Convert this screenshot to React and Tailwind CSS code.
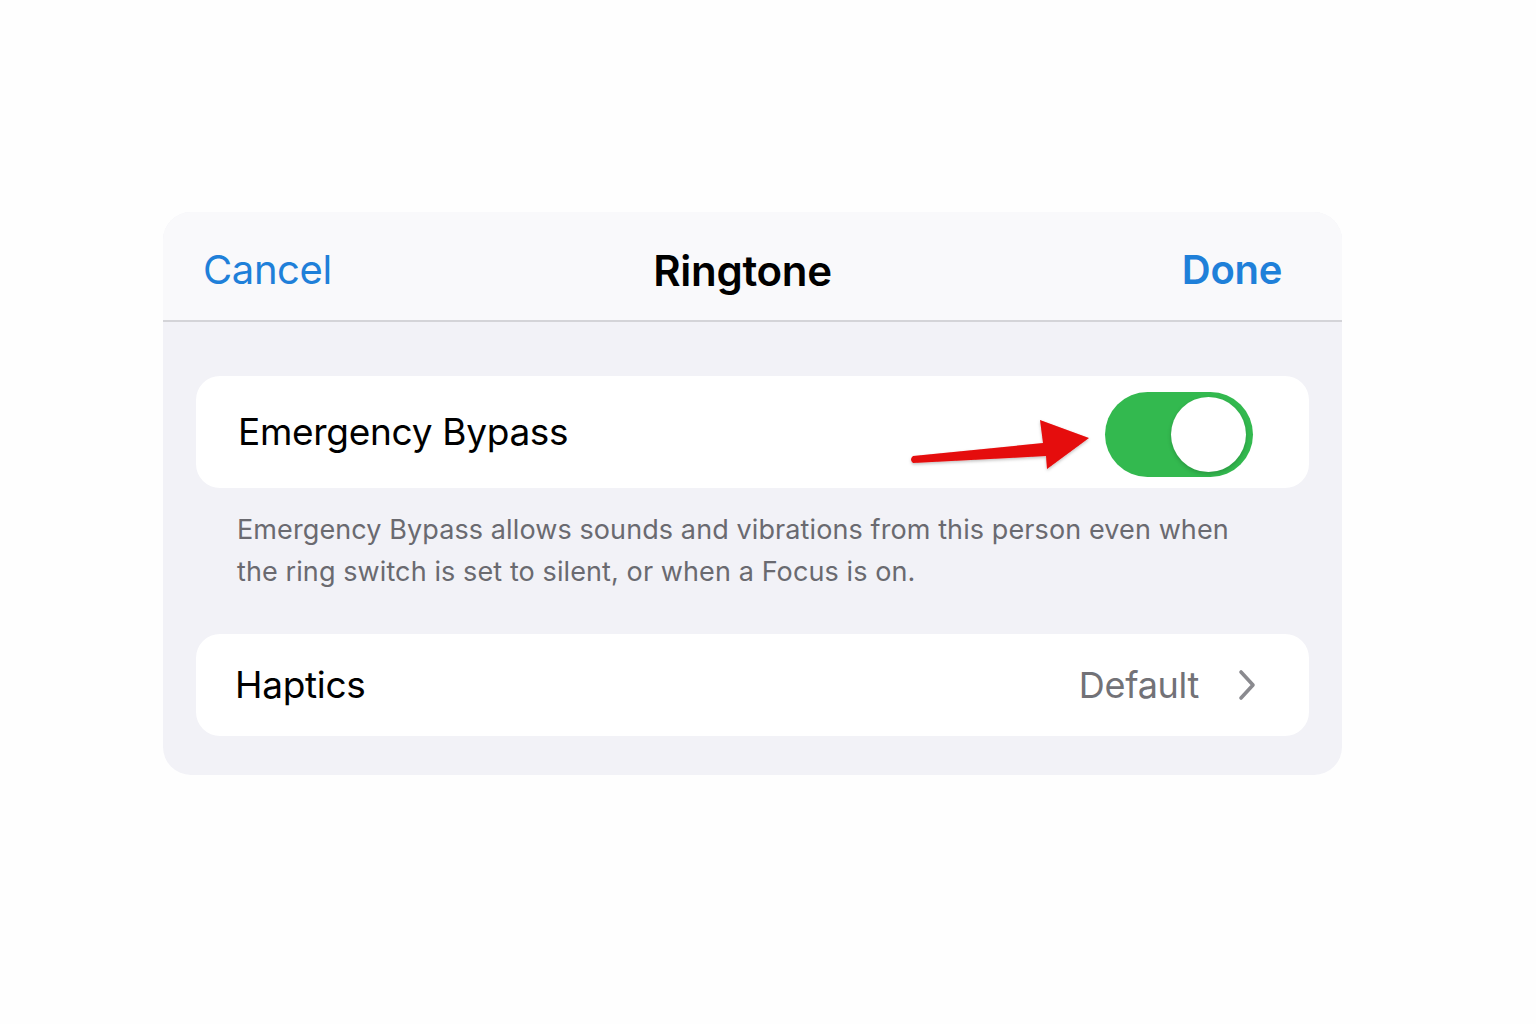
import React from 'react';

const font = { fontFamily: 'Inter, "Noto Sans", sans-serif' };

// Red callout arrow pointing at the switch
const Arrow = () => (
    <svg
        className="absolute left-[-205px] top-[22px]"
        width="200"
        height="60"
        viewBox="0 0 200 60"
    >
        <defs>
            <filter id="arrowShadow" x="-10%" y="-20%" width="120%" height="150%">
                <feDropShadow dx="0" dy="1.5" stdDeviation="1.5" floodColor="#000" floodOpacity="0.25" />
            </filter>
        </defs>
        <path
            d="M13 42 L143 29 L140 6 L189 24 L147 55 L146 42 L13 49 Q9 45.5 13 42 Z"
            fill="#e50909"
            filter="url(#arrowShadow)"
        />
    </svg>
);

const Toggle = () => (
    <div className="relative w-[148px] h-[85px] rounded-full bg-[#33b94f] shrink-0">
        <div className="absolute right-[7px] top-[5px] w-[75px] h-[75px] rounded-full bg-white shadow-[0_2px_4px_rgba(0,0,0,0.18)]" />
    </div>
);

const Chevron = () => (
    <svg width="20" height="32" viewBox="0 0 20 32" fill="none">
        <path d="M4 3 L16 16 L4 29" stroke="#8a8a8f" strokeWidth="3.6" strokeLinecap="round" strokeLinejoin="round" />
    </svg>
);

export default function App() {
    return (
        <div className="w-full h-[1024px] bg-[#fefefe] pt-[212px] pl-[163px]" style={font}>
            <div className="w-[1179px] rounded-[28px] overflow-hidden bg-[#f2f2f7]">
                {/* Navigation bar */}
                <div className="relative h-[110px] bg-[#f9f9fb] border-b-2 border-[#d4d4d8] flex items-center justify-between pl-[40px] pr-[60px] pt-[8px]">
                    <span className="text-[40px] text-[#1f80d9] tracking-[-0.4px]">Cancel</span>
                    <span className="absolute left-0 right-[20px] text-center text-[42px] font-semibold text-black tracking-[-0.3px] pointer-events-none">
                        Ringtone
                    </span>
                    <span className="text-[40px] font-semibold text-[#1f80d9] tracking-[-0.3px]">Done</span>
                </div>

                {/* Settings content */}
                <div className="px-[33px] pt-[54px] pb-[39px]">
                    <div className="h-[112px] rounded-[24px] bg-white flex items-center justify-between pl-[42px] pr-[56px]">
                        <span className="text-[37px] text-black tracking-[-0.3px]">Emergency Bypass</span>
                        <div className="relative mt-[4px]">
                            <Arrow />
                            <Toggle />
                        </div>
                    </div>

                    <p className="pl-[41px] pr-[40px] pt-[21px] h-[146px] text-[27px] leading-[42px] tracking-[0.1px] text-[#6a6a70]">
                        Emergency Bypass allows sounds and vibrations from this person even when the ring switch is set to silent, or when a Focus is on.
                    </p>

                    <div className="h-[102px] rounded-[24px] bg-white flex items-center justify-between pl-[39px] pr-[52px]">
                        <span className="text-[37px] text-black tracking-[-0.3px]">Haptics</span>
                        <div className="flex items-center gap-[38px]">
                            <span className="text-[36px] text-[#727277] tracking-[-0.3px]">Default</span>
                            <Chevron />
                        </div>
                    </div>
                </div>
            </div>
        </div>
    );
}
